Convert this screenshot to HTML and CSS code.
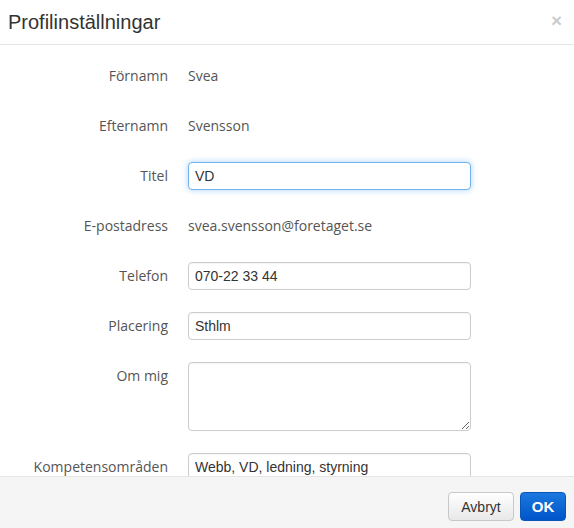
FILE: index.html
```html
<!DOCTYPE html>
<html lang="sv">
<head>
<meta charset="utf-8">
<title>Profilinställningar</title>
<link rel="stylesheet" href="styles.css">
</head>
<body>
<div class="modal">
  <div class="modal-header">
    <h1 class="modal-title">Profilinställningar</h1>
    <button class="close" type="button">×</button>
  </div>
  <div class="modal-body">
    <form class="form">
      <label class="lbl">Förnamn</label>
      <div class="static">Svea</div>

      <label class="lbl">Efternamn</label>
      <div class="static">Svensson</div>

      <label class="lbl">Titel</label>
      <input class="field focused" type="text" value="VD">

      <label class="lbl">E-postadress</label>
      <div class="static">svea.svensson@foretaget.se</div>

      <label class="lbl">Telefon</label>
      <input class="field" type="text" value="070-22 33 44">

      <label class="lbl">Placering</label>
      <input class="field" type="text" value="Sthlm">

      <label class="lbl">Om mig</label>
      <textarea class="field area"></textarea>

      <label class="lbl">Kompetensområden</label>
      <input class="field" type="text" value="Webb, VD, ledning, styrning">
    </form>
  </div>
  <div class="modal-footer">
    <button class="btn btn-default" type="button">Avbryt</button>
    <button class="btn btn-primary" type="button">OK</button>
  </div>
</div>
</body>
</html>
```

FILE: styles.css
```css
html, body {
  margin: 0;
  padding: 0;
  background: #fff;
}

.modal {
  width: 574px;
  height: 528px;
  display: flex;
  flex-direction: column;
  overflow: hidden;
}

.modal-header {
  display: flex;
  align-items: center;
  justify-content: space-between;
  padding: 8px 8px 8px 8px;
  height: 44px;
  box-sizing: border-box;
  border-bottom: 1px solid #e5e5e5;
  flex: none;
  height: 45px;
}

.modal-title {
  margin: 0;
  font-family: "Liberation Sans", Arial, sans-serif;
  font-weight: normal;
  font-size: 20px;
  line-height: 28px;
  color: #333;
}

.close {
  border: 0;
  background: none;
  padding: 0 4px 0 0;
  margin: 0;
  font-family: "Liberation Sans", Arial, sans-serif;
  font-weight: bold;
  font-size: 19px;
  line-height: 28px;
  color: #000;
  opacity: 0.2;
  margin-top: -2px;
}

.modal-body {
  flex: 1;
  overflow: hidden;
  padding: 17px 0 0 8px;
}

.form {
  display: grid;
  grid-template-columns: 160px 283px;
  column-gap: 20px;
  row-gap: 22px;
  align-items: start;
}

.lbl {
  text-align: right;
  font-family: "Open Sans", sans-serif;
  font-size: 14px;
  line-height: 28px;
  color: #555;
}

.static {
  font-family: "Open Sans", sans-serif;
  font-size: 14px;
  line-height: 28px;
  color: #555;
}

.field {
  box-sizing: border-box;
  width: 283px;
  height: 28px;
  margin: 0;
  padding: 0 6px;
  border: 1px solid #ccc;
  border-radius: 4px;
  font-family: "Liberation Sans", Arial, sans-serif;
  font-size: 14px;
  color: #333;
  background: #fff;
  box-shadow: inset 0 1px 1px rgba(0, 0, 0, 0.04);
  outline: none;
}

.field.focused {
  border-color: #72b4ee;
  box-shadow: 0 0 6px rgba(102, 175, 233, 0.55);
}

.area {
  height: 69px;
  padding: 6px;
  resize: both;
}

.modal-footer {
  flex: none;
  height: 52px;
  box-sizing: border-box;
  border-top: 1px solid #e5e5e5;
  background: #f5f5f5;
  display: flex;
  justify-content: flex-end;
  align-items: flex-start;
  gap: 6px;
  padding: 15px 8px 0 0;
}

.btn {
  box-sizing: border-box;
  height: 29px;
  border-radius: 4px;
  font-family: "Liberation Sans", Arial, sans-serif;
  font-size: 14px;
  margin: 0;
  cursor: pointer;
}

.btn-default {
  width: 66px;
  padding: 0;
  color: #333;
  border: 1px solid #c8c8c8;
  background: linear-gradient(#ffffff, #e8e8e8);
}

.btn-primary {
  width: 46px;
  padding: 0;
  color: #fff;
  font-weight: bold;
  font-size: 15px;
  border: 1px solid #0a55b8;
  background: linear-gradient(#1b78de, #0055c9);
}
```
